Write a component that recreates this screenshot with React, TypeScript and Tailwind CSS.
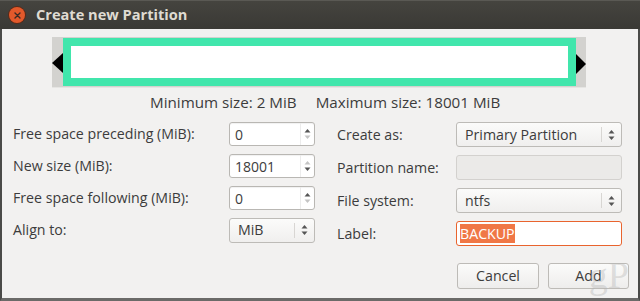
import React from "react";

const font = { fontFamily: '"Open Sans", "Noto Sans", sans-serif' };

function Arrows({ upOn, downOn }: { upOn: boolean; downOn: boolean }) {
  return (
    <svg width="7" height="12" viewBox="0 0 7 12">
      <path d="M3.5 1L6.5 4.5H0.5Z" fill={upOn ? "#555" : "#c4c4c4"} />
      <path d="M3.5 11L6.5 7.5H0.5Z" fill={downOn ? "#555" : "#c4c4c4"} />
    </svg>
  );
}

function Spin({ value, upOn, downOn }: { value: string; upOn: boolean; downOn: boolean }) {
  return (
    <div className="flex h-[24px] w-[86px] rounded-[3px] border border-[#b9b7b3] bg-white shadow-[inset_0_1px_1px_rgba(0,0,0,0.06)]">
      <div className="flex flex-1 items-center pl-[5px] text-[14px] text-[#3c3c3c]">{value}</div>
      <div className="flex w-[14px] items-center justify-center border-l border-[#ececec]">
        <Arrows upOn={upOn} downOn={downOn} />
      </div>
    </div>
  );
}

function Combo({ value, w }: { value: string; w: string }) {
  return (
    <div className={`flex h-[25px] ${w} rounded-[3px] border border-[#bdbbb7] bg-gradient-to-b from-[#fbfbfa] to-[#f0efee]`}>
      <div className="flex flex-1 items-center pl-[8px] text-[14.2px] text-[#3c3c3c]">{value}</div>
      <div className="my-[4px] flex w-[20px] items-center justify-center border-l border-[#d8d6d3]">
        <Arrows upOn downOn />
      </div>
    </div>
  );
}

const lbl = "text-[14.2px] text-[#3c3c3c]";

export default function App() {
  return (
    <div className="flex h-[301px] w-[640px] flex-col overflow-hidden" style={font}>
      <div className="flex h-[29px] items-center border-t border-[#5a5954] bg-gradient-to-b from-[#45443f] to-[#3a3935]">
        <div className="ml-[9px] flex h-[16px] w-[16px] items-center justify-center rounded-full bg-[#e2592b] shadow-[0_0_0_1px_#5a2a18]">
          <svg width="7" height="7" viewBox="0 0 7 7">
            <path d="M1 1L6 6M6 1L1 6" stroke="#3a2a24" strokeWidth="1.4" strokeLinecap="round" />
          </svg>
        </div>
        <div className="ml-[11px] text-[14.6px] font-bold text-[#dfdbd2]">Create new Partition</div>
      </div>
      <div className="relative flex flex-1 flex-col border-x-[2px] border-b-[3px] border-x-[#4a4a48] border-b-[#6b6a68] bg-[#f2f1f0]">
        <div className="relative ml-[50px] mt-[8px] flex h-[51px] w-[534px] border-b border-[#e6e5e3] bg-[#d3d2cf] px-[10px] py-[1px]">
          <div className="ml-[1px] flex-1 bg-[#41e6ac] p-[8px]">
            <div className="h-full w-full bg-white" />
          </div>
          <div className="absolute left-0 top-[16px] h-0 w-0 border-y-[10px] border-r-[11px] border-y-transparent border-r-black" />
          <div className="absolute right-0 top-[17px] h-0 w-0 border-y-[10px] border-l-[10px] border-y-transparent border-l-black" />
        </div>
        <div className="mt-[4px] flex h-[20px] items-center pl-[148px] text-[15.2px] text-[#3c3c3c]">
          <span>Minimum size: 2 MiB</span>
          <span className="ml-[19px]">Maximum size: 18001 MiB</span>
        </div>
        <div className="mt-[10px] flex">
          <div className="flex flex-col gap-[8px] pl-[11px]">
            {[
              ["Free space preceding (MiB):", <Spin value="0" upOn downOn={false} />],
              ["New size (MiB):", <Spin value="18001" upOn={false} downOn />],
              ["Free space following (MiB):", <Spin value="0" upOn downOn={false} />],
            ].map(([l, c], i) => (
              <div key={i} className="flex h-[24px] items-center">
                <div className={`w-[216px] ${lbl}`}>{l}</div>
                {c}
              </div>
            ))}
            <div className="flex h-[24px] items-center">
              <div className={`w-[216px] ${lbl}`}>Align to:</div>
              <Combo value="MiB" w="w-[86px]" />
            </div>
          </div>
          <div className="ml-[22px] flex flex-col gap-[8px]">
            <div className="flex h-[25px] items-center">
              <div className={`w-[119px] ${lbl}`}>Create as:</div>
              <Combo value="Primary Partition" w="w-[166px]" />
            </div>
            <div className="flex h-[25px] items-center">
              <div className={`w-[119px] ${lbl}`}>Partition name:</div>
              <div className="h-[25px] w-[166px] rounded-[3px] border border-[#d3d1ce] bg-[#ebeae8]" />
            </div>
            <div className="flex h-[25px] items-center">
              <div className={`w-[119px] ${lbl}`}>File system:</div>
              <Combo value="ntfs" w="w-[166px]" />
            </div>
            <div className="flex h-[25px] items-center">
              <div className={`w-[119px] ${lbl}`}>Label:</div>
              <div className="flex h-[25px] w-[166px] items-center rounded-[3px] border border-[#e9642e] bg-white pl-[3px]">
                <span className="bg-[#f07746] text-[14.2px] leading-[19px] text-white">BACKUP</span>
              </div>
            </div>
          </div>
        </div>
        <div className="mt-[17px] flex justify-end gap-[9px] pr-[9px]">
          <div className="flex h-[26px] w-[82px] items-center justify-center rounded-[3px] border border-[#bdbbb7] bg-gradient-to-b from-[#fbfbfa] to-[#eeedec] text-[14.2px] text-[#3c3c3c]">Cancel</div>
          <div className="flex h-[26px] w-[81px] items-center justify-center rounded-[3px] border border-[#bdbbb7] bg-gradient-to-b from-[#fbfbfa] to-[#eeedec] text-[14.2px] text-[#3c3c3c]">Add</div>
        </div>
        <div className="pointer-events-none absolute bottom-[4px] right-[9px] text-[38px] leading-none text-[rgba(180,180,180,0.4)]" style={{ fontFamily: '"Liberation Serif", serif' }}>gP</div>
      </div>
    </div>
  );
}
